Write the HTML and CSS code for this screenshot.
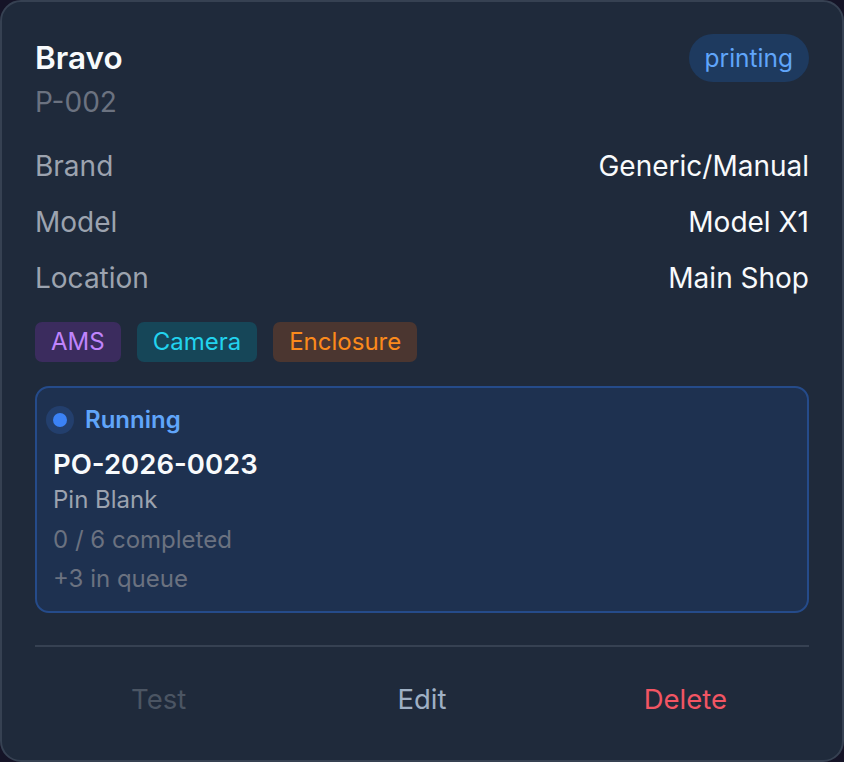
FILE: index.html
```html
<!DOCTYPE html>
<html lang="en">
<head>
  <meta charset="UTF-8" />
  <meta name="viewport" content="width=device-width, initial-scale=1.0" />
  <title>Printer Bravo</title>
  <link rel="stylesheet" href="styles.css">
</head>
<body>
  <div class="printer-card">
    <header class="card-head">
      <div>
        <h2 class="printer-name">Bravo</h2>
        <div class="printer-code">P-002</div>
      </div>
      <span class="status-pill">printing</span>
    </header>

    <dl class="specs">
      <div class="spec-row"><dt>Brand</dt><dd>Generic/Manual</dd></div>
      <div class="spec-row"><dt>Model</dt><dd>Model X1</dd></div>
      <div class="spec-row"><dt>Location</dt><dd>Main Shop</dd></div>
    </dl>

    <div class="tags">
      <span class="tag tag-ams">AMS</span>
      <span class="tag tag-camera">Camera</span>
      <span class="tag tag-enclosure">Enclosure</span>
    </div>

    <!-- current job -->
    <div class="job">
      <div class="job-state">
        <span class="dot"></span>
        <span>Running</span>
      </div>
      <div class="job-number">PO-2026-0023</div>
      <div class="job-product">Pin Blank</div>
      <div class="job-meta">0 / 6 completed</div>
      <div class="job-meta">+3 in queue</div>
    </div>

    <div class="actions">
      <button class="action action-test">Test</button>
      <button class="action action-edit">Edit</button>
      <button class="action action-delete">Delete</button>
    </div>
  </div>
</body>
</html>
```

FILE: styles.css
```css
:root {
  --card: #1f2a3b;
  --border: #364152;
  --text: #f8fafc;
  --muted: #9ca3af;
  --faint: #6b7280;
}

* {
  box-sizing: border-box;
}

body {
  margin: 0;
  background: #151427;
  font-family: 'Inter', 'Noto Sans', sans-serif;
  color: var(--text);
}

.printer-card {
  width: 844px;
  height: 762px;
  background: var(--card);
  border: 2px solid var(--border);
  border-radius: 21px;
  padding: 33px 33px 0;
  display: flex;
  flex-direction: column;
}

.card-head {
  display: flex;
  justify-content: space-between;
  align-items: flex-start;
}

.printer-name {
  margin: 0;
  font-size: 31.5px;
  font-weight: 600;
  line-height: 46px;
}

.printer-code {
  margin-top: 2px;
  font-size: 28px;
  line-height: 38px;
  color: var(--faint);
}

.status-pill {
  margin-top: -1px;
  padding: 0 16px;
  height: 48px;
  line-height: 48px;
  border-radius: 24px;
  background: #1e3a5f;
  color: #60a5fa;
  font-size: 24.5px;
}

.specs {
  margin: 24px 0 0;
  display: flex;
  flex-direction: column;
  gap: 14px;
}

.spec-row {
  display: flex;
  justify-content: space-between;
  font-size: 28px;
  line-height: 42px;
}

.spec-row dt {
  color: var(--muted);
}

.spec-row dd {
  margin: 0;
  color: var(--text);
}

.tags {
  display: flex;
  gap: 16px;
  margin-top: 23px;
}

.tag {
  height: 40px;
  line-height: 40px;
  padding: 0 16px;
  border-radius: 7px;
  font-size: 24px;
}

.tag-ams {
  background: #3b2c5e;
  color: #c084fc;
}

.tag-camera {
  background: #164658;
  color: #22d3ee;
}

.tag-enclosure {
  background: #4b3630;
  color: #fb8a1c;
}

.job {
  margin-top: 24px;
  background: #1e3150;
  border: 2px solid #254b8a;
  border-radius: 14px;
  padding: 14px 16px 15px;
}

.job-state {
  display: flex;
  align-items: center;
  gap: 18px;
  font-size: 24px;
  font-weight: 600;
  color: #60a5fa;
  line-height: 36px;
}

.dot {
  width: 14px;
  height: 14px;
  border-radius: 50%;
  background: #3b82f6;
  box-shadow: 0 0 0 7px rgba(59, 130, 246, 0.18);
}

.job-number {
  margin-top: 7px;
  font-size: 27.5px;
  font-weight: 600;
  line-height: 38px;
}

.job-product {
  font-size: 24px;
  line-height: 34px;
  color: var(--muted);
}

.job-meta {
  margin-top: 6px;
  font-size: 24px;
  line-height: 34px;
  color: var(--faint);
}

.job-meta:last-child {
  margin-top: 5px;
}

.actions {
  margin-top: 32px;
  border-top: 2px solid var(--border);
  display: flex;
  gap: 16px;
  padding-top: 30px;
}

.action {
  flex: 1;
  background: none;
  border: none;
  font-family: inherit;
  font-size: 27.5px;
  line-height: 42px;
  cursor: pointer;
}

.action-test {
  color: #4b5563;
}

.action-edit {
  color: #9fb0c4;
}

.action-delete {
  color: #f25563;
}
```
